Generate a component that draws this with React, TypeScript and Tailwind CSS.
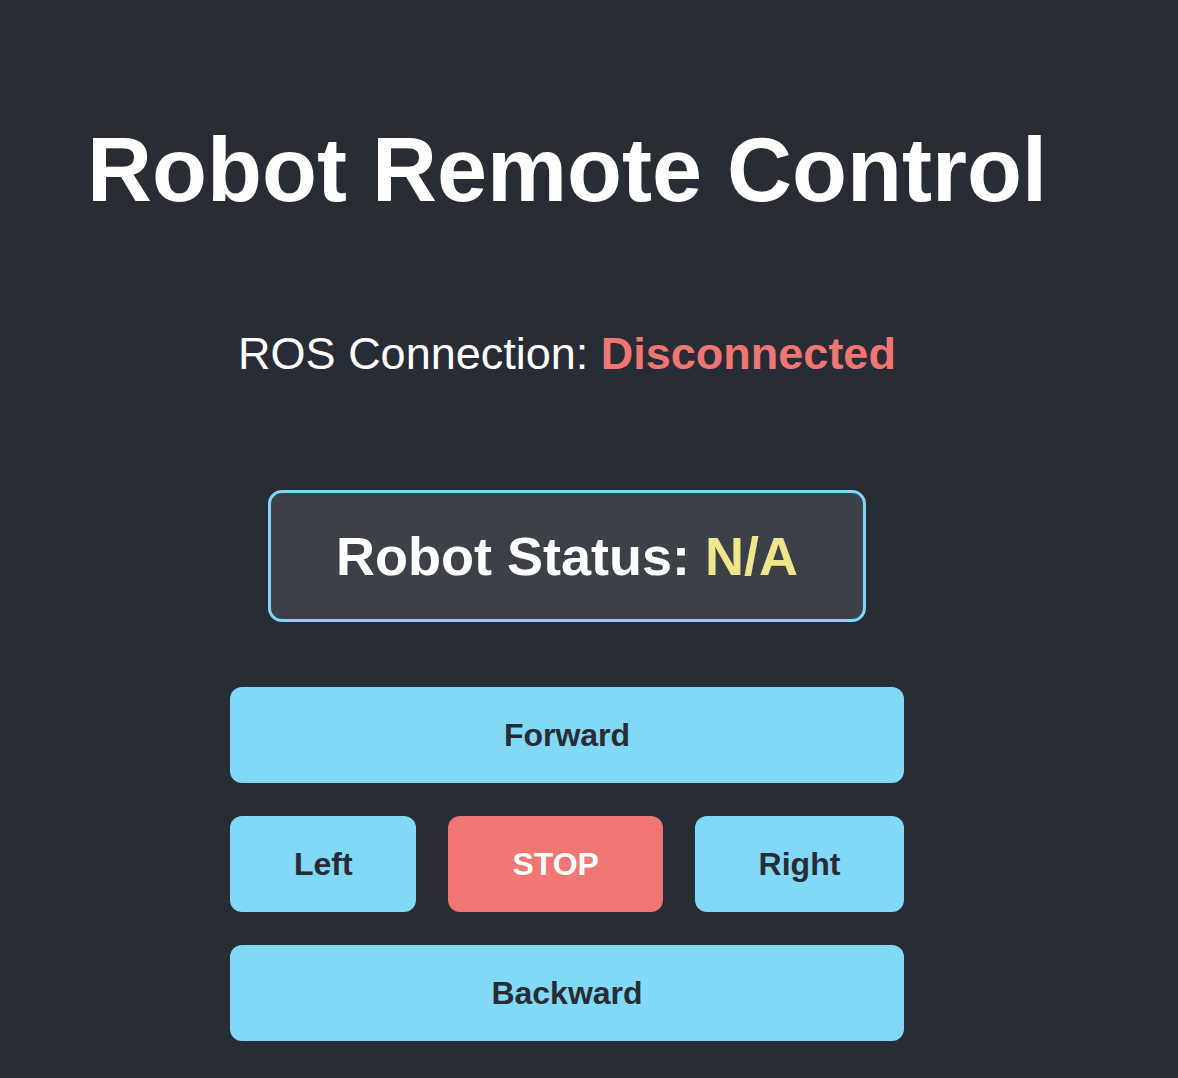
const App = () => {
  const status = "N/A";
  const connected = false;

  return (
    <main className="min-h-screen w-full bg-[#282c34] font-['Liberation_Sans',Arial,sans-serif]">
      <div className="flex w-[1134px] flex-col items-center pt-[125px] pb-[37px]">
        <h1 className="text-[90px] font-bold leading-none text-white">Robot Remote Control</h1>

        <p className="mt-[116px] text-[45px] leading-none text-white">
          ROS Connection:{" "}
          <span className={connected ? "font-bold text-[#7fd8a0]" : "font-bold text-[#ef7672]"}>
            {connected ? "Connected" : "Disconnected"}
          </span>
        </p>

        <div className="mt-[114px] flex h-[132px] w-[598px] items-center justify-center rounded-[14px] border-[3px] border-[#7fd6f5] bg-[#3b4049]">
          <h2 className="text-[54px] font-bold leading-none text-white">
            Robot Status: <span className="text-[#f0e68c]">{status}</span>
          </h2>
        </div>

        <div className="mt-[65px] flex w-[674px] flex-col gap-[33px]">
          <button className="h-[96px] w-full rounded-[12px] bg-[#81d8f7] text-[32px] font-bold text-[#282c34]">
            Forward
          </button>
          <div className="flex gap-[32px]">
            <button className="h-[96px] min-w-0 flex-auto rounded-[12px] bg-[#81d8f7] px-16 text-[32px] font-bold text-[#282c34]">
              Left
            </button>
            <button className="h-[96px] min-w-0 flex-auto rounded-[12px] bg-[#ef7672] px-16 text-[32px] font-bold text-white">
              STOP
            </button>
            <button className="h-[96px] min-w-0 flex-auto rounded-[12px] bg-[#81d8f7] px-16 text-[32px] font-bold text-[#282c34]">
              Right
            </button>
          </div>
          <button className="h-[96px] w-full rounded-[12px] bg-[#81d8f7] text-[32px] font-bold text-[#282c34]">
            Backward
          </button>
        </div>
      </div>
    </main>
  );
};

export default App;
